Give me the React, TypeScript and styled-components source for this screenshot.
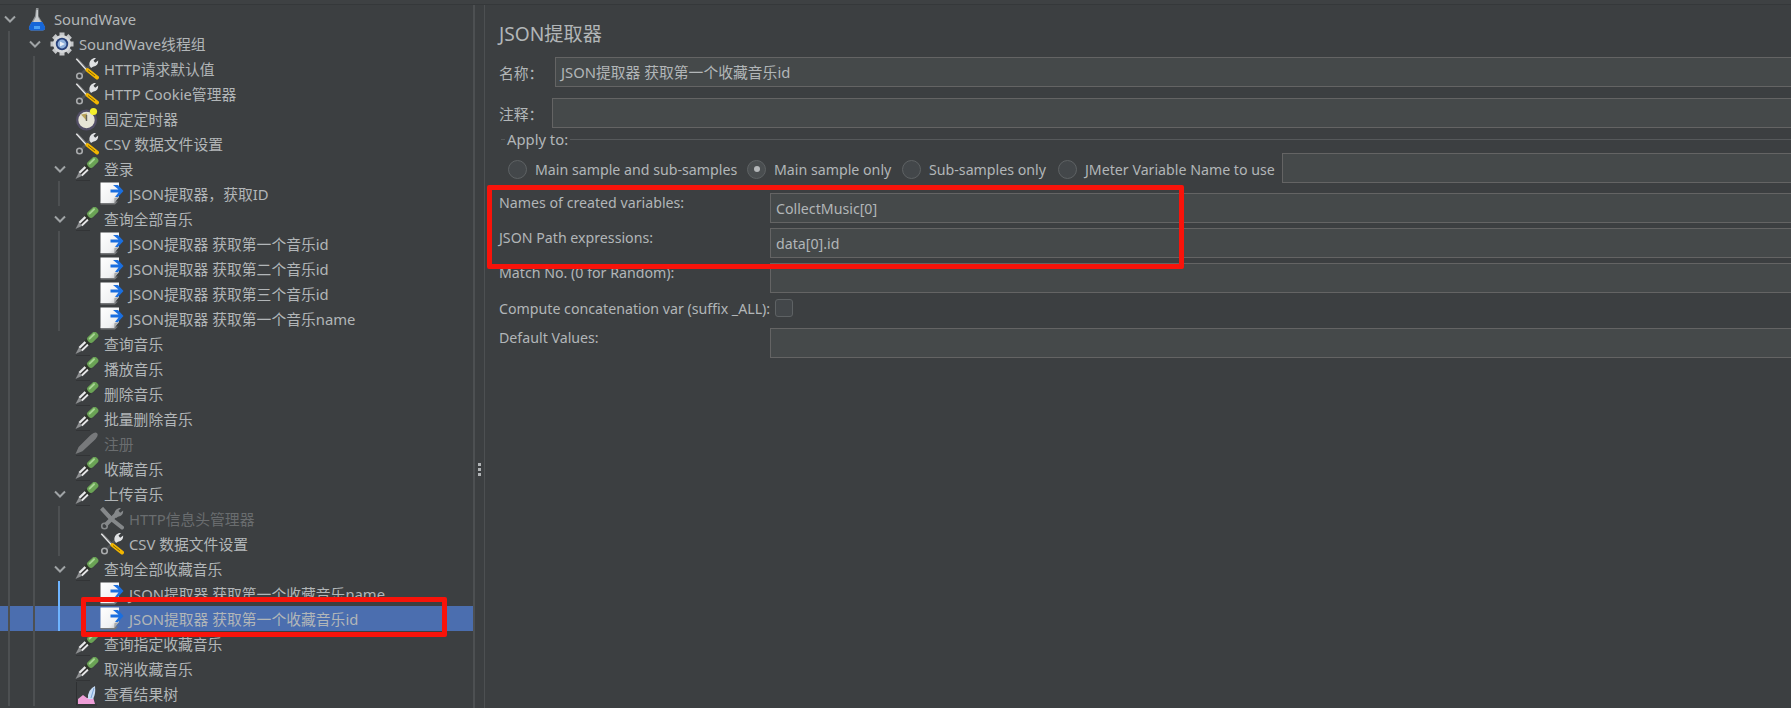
import React from "react";
import styled, { createGlobalStyle } from "styled-components";

const GlobalStyle = createGlobalStyle`
  html, body {
    margin: 0;
    padding: 0;
    height: 100%;
    background: #3c3f41;
    overflow: hidden;
  }
  * {
    box-sizing: border-box;
  }
`;

const Page = styled.div`
  position: relative;
  width: 1791px;
  height: 708px;
  overflow: hidden;
  background: #3c3f41;
  color: #b2b6b8;
  font-family: "Noto Sans", "Noto Sans CJK SC", sans-serif;
  font-size: 14.8px;
`;

const TopStrip = styled.div`
  height: 5px;
  border-bottom: 1px solid #35383a;
  background: #3e4143;
`;

const Main = styled.div`
  display: flex;
  height: 703px;
`;

/* ---------- tree ---------- */

const TreePane = styled.div`
  width: 473px;
  flex: none;
  padding-top: 1px;
  overflow: hidden;
`;

const Row = styled.div<{ $level: number; $selected?: boolean }>`
  position: relative;
  display: flex;
  align-items: center;
  height: 25px;
  padding-left: ${({ $level }) => $level * 25}px;
  background: ${({ $selected }) => ($selected ? "#4b6eaf" : "transparent")};
  white-space: nowrap;
`;

const Guide = styled.span<{ $level: number; $active?: boolean }>`
  position: absolute;
  top: 0;
  bottom: 0;
  left: ${({ $level }) => 8 + $level * 25}px;
  width: 2px;
  background: ${({ $active }) => ($active ? "#6eb4ff" : "#4d5052")};
`;

const ChevronSlot = styled.span`
  display: flex;
  align-items: center;
  width: 25px;
  flex: none;
  padding-left: 4px;
`;

const IconBox = styled.span`
  display: flex;
  width: 24px;
  height: 24px;
  flex: none;
  margin-right: 5px;
`;

const RowLabel = styled.span<{ $disabled?: boolean }>`
  color: ${({ $disabled }) => ($disabled ? "#6a6d6f" : "#b2b6b8")};
`;

const Chevron = () => (
  <svg width="12" height="8" viewBox="0 0 12 8">
    <path d="M1 1.5 L6 6.5 L11 1.5" fill="none" stroke="#a0a4a6" strokeWidth="2" />
  </svg>
);

const Flask = () => (
  <svg width="24" height="24" viewBox="0 0 24 24">
    <path d="M11 1 L13.5 1 L13.5 9 L20 20 Q20.5 23 18 23.5 L6 23.5 Q3.5 23 4 20 L10 9 Z" fill="#8f9396" />
    <path d="M11.5 3 L13 3 L13 10 L17 17 L7 17 L11 10 Z" fill="#c9ccce" />
    <path d="M6.5 15 L17.5 15 L20 20 Q20.5 23 18 23.5 L6 23.5 Q3.5 23 4 20 Z" fill="#1666d8" />
    <path d="M9 19 L15 19 L15 22 L9 22 Z" fill="#4aa0f5" />
  </svg>
);

const Gear = () => (
  <svg width="24" height="24" viewBox="0 0 24 24">
    {[0, 45, 90, 135, 180, 225, 270, 315].map((a) => (
      <rect key={a} x="9.5" y="0.5" width="5" height="5" fill="#c4c6c8" transform={`rotate(${a} 12 12)`} />
    ))}
    <circle cx="12" cy="12" r="9" fill="#d6d8da" />
    <circle cx="12" cy="12" r="6.2" fill="#27407a" />
    <circle cx="12" cy="12" r="4.4" fill="#8fb0dc" />
    <path d="M10 9.5 L15 12 L10 14.5 Z" fill="#e8eef6" />
  </svg>
);

const Tools = ({ off }: { off?: boolean }) => (
  <svg width="24" height="24" viewBox="0 0 24 24">
    {/* wrench, lower left to upper right */}
    <path d="M5.5 18 L17 6.5" stroke={off ? "#85888a" : "#505356"} strokeWidth={off ? 4 : 2.6} />
    <circle cx="4.5" cy="19" r="2.8" fill="none" stroke={off ? "#85888a" : "#a8aaac"} strokeWidth="1.6" />
    <path d="M14.5 8.5 Q13.5 3 19 1 L21 1 L18.5 3.8 L20.2 5.8 L23.2 3.4 Q23.5 8.5 18 9.8 L16 11 Z" fill={off ? "#85888a" : "#e0e2e4"} />
    {/* screwdriver, upper left to lower right */}
    <path d="M1.5 1.5 L12 13" stroke={off ? "#85888a" : "#e4e5e6"} strokeWidth={off ? 4 : 2} />
    <path d="M2 1 L12.5 12.5" stroke={off ? "#85888a" : "#303234"} strokeWidth={off ? 3 : 0.7} />
    <path d="M12.5 13 L22 20.5" stroke={off ? "#85888a" : "#f2b600"} strokeWidth="4" strokeLinecap="round" />
    {!off && <path d="M13 13.5 L20 19" stroke="#3a3000" strokeWidth="0.6" />}
  </svg>
);

const Timer = () => (
  <svg width="24" height="24" viewBox="0 0 24 24">
    <circle cx="11.5" cy="13" r="10.5" fill="#524e66" />
    <circle cx="11.5" cy="13" r="8.2" fill="#e6e4d6" />
    <path d="M11 13 L6 7.5 L12 6.5 Z" fill="#b9a35a" />
    <path d="M11.5 8 L11.5 14" stroke="#66625a" strokeWidth="1.4" />
    <circle cx="18.5" cy="4.5" r="3.6" fill="#f4ee2c" />
  </svg>
);

const Pipette = ({ off }: { off?: boolean }) => (
  <svg width="24" height="24" viewBox="0 0 24 24">
    <path d="M1 23.5 L15 23.5" stroke="#323436" strokeWidth="1" />
    <g transform="translate(0.5 22) rotate(-44)">
      {off ? (
        <path d="M0 0 L7 -2.8 L18 -3 Q30 -4 30 0 Q30 4 18 3 L7 2.8 Z" fill="#77797b" />
      ) : (
        <>
          <path d="M0 0 L7 -2.4 L7 2.4 Z" fill="#8c8e90" />
          <rect x="7" y="-2.8" width="9" height="5.6" fill="#e6e7e8" />
          <rect x="7" y="-0.7" width="9" height="1.6" fill="#2e2e2e" />
          <rect x="15.5" y="-3.4" width="2.6" height="6.8" fill="#2f352b" />
          <rect x="18" y="-3.6" width="12" height="7.2" rx="3" fill="#6aa355" />
          <rect x="20" y="-2.2" width="8" height="1.8" rx="0.9" fill="#a8d694" />
        </>
      )}
    </g>
  </svg>
);

const Extractor = () => (
  <svg width="24" height="24" viewBox="0 0 24 24">
    <defs>
      <linearGradient id="page" x1="0" y1="0" x2="1" y2="1">
        <stop offset="0" stopColor="#ffffff" />
        <stop offset="0.7" stopColor="#f0f1f2" />
        <stop offset="1" stopColor="#b8babc" />
      </linearGradient>
    </defs>
    <path d="M0.5 22.5 L15 22.5 L18 19.5 L0.5 19.5 Z" fill="#77797b" />
    <path d="M0.5 0.5 L19 0.5 L19 15 L14 21 L0.5 21 Z" fill="url(#page)" />
    <path d="M14 21 L14.5 16 L19 15 Z" fill="#a8aaac" />
    <path d="M13 3 L18 3 L23.5 9 L18 15 L15 15 L18.5 10.5 L10.5 10.5 L10.5 7.5 L18.5 7.5 Z" fill="#1a6fe0" />
  </svg>
);

const ResultTree = () => (
  <svg width="24" height="24" viewBox="0 0 24 24">
    <path d="M1.5 0 L1.5 23 L22 23" fill="none" stroke="#2e3032" strokeWidth="1" />
    <path d="M3 22 L3 17 L8 13 L12 16 L18 15 L20 22 Z" fill="#ee9fd8" />
    <path d="M13 17 Q12 8 20 4 Q21 12 18 17 Z" fill="#c8dcf4" />
    <path d="M16 16 L19 6" stroke="#7aa2d8" strokeWidth="1" />
  </svg>
);

type IconName = "flask" | "gear" | "tools" | "toolsOff" | "timer" | "pipette" | "pipetteOff" | "doc" | "result";

const icons: Record<IconName, React.ReactNode> = {
  flask: <Flask />,
  gear: <Gear />,
  tools: <Tools />,
  toolsOff: <Tools off />,
  timer: <Timer />,
  pipette: <Pipette />,
  pipetteOff: <Pipette off />,
  doc: <Extractor />,
  result: <ResultTree />,
};

interface TreeItem {
  level: number;
  icon: IconName;
  label: string;
  open?: boolean;
  disabled?: boolean;
  selected?: boolean;
  activeGuide?: boolean;
}

const treeItems: TreeItem[] = [
  { level: 0, icon: "flask", label: "SoundWave", open: true },
  { level: 1, icon: "gear", label: "SoundWave线程组", open: true },
  { level: 2, icon: "tools", label: "HTTP请求默认值" },
  { level: 2, icon: "tools", label: "HTTP Cookie管理器" },
  { level: 2, icon: "timer", label: "固定定时器" },
  { level: 2, icon: "tools", label: "CSV 数据文件设置" },
  { level: 2, icon: "pipette", label: "登录", open: true },
  { level: 3, icon: "doc", label: "JSON提取器，获取ID" },
  { level: 2, icon: "pipette", label: "查询全部音乐", open: true },
  { level: 3, icon: "doc", label: "JSON提取器 获取第一个音乐id" },
  { level: 3, icon: "doc", label: "JSON提取器 获取第二个音乐id" },
  { level: 3, icon: "doc", label: "JSON提取器 获取第三个音乐id" },
  { level: 3, icon: "doc", label: "JSON提取器 获取第一个音乐name" },
  { level: 2, icon: "pipette", label: "查询音乐" },
  { level: 2, icon: "pipette", label: "播放音乐" },
  { level: 2, icon: "pipette", label: "删除音乐" },
  { level: 2, icon: "pipette", label: "批量删除音乐" },
  { level: 2, icon: "pipetteOff", label: "注册", disabled: true },
  { level: 2, icon: "pipette", label: "收藏音乐" },
  { level: 2, icon: "pipette", label: "上传音乐", open: true },
  { level: 3, icon: "toolsOff", label: "HTTP信息头管理器", disabled: true },
  { level: 3, icon: "tools", label: "CSV 数据文件设置" },
  { level: 2, icon: "pipette", label: "查询全部收藏音乐", open: true },
  { level: 3, icon: "doc", label: "JSON提取器 获取第一个收藏音乐name", activeGuide: true },
  { level: 3, icon: "doc", label: "JSON提取器 获取第一个收藏音乐id", activeGuide: true, selected: true },
  { level: 2, icon: "pipette", label: "查询指定收藏音乐" },
  { level: 2, icon: "pipette", label: "取消收藏音乐" },
  { level: 2, icon: "result", label: "查看结果树" },
];

/* ---------- splitter ---------- */

const Splitter = styled.div`
  width: 12px;
  flex: none;
  display: flex;
  flex-direction: column;
  align-items: center;
  justify-content: center;
  gap: 2px;
  padding-top: 225px;
  border-left: 2px solid #4d5052;
  border-right: 1px solid #4d5052;
`;

const SplitterDot = styled.span`
  width: 3px;
  height: 3px;
  background: #b0b3b5;
`;

/* ---------- form ---------- */

const FormPane = styled.div`
  flex: 1;
  min-width: 0;
  padding: 14px 0 0 14px;
  overflow: hidden;
  font-size: 14.2px;
`;

const Title = styled.div`
  height: 30px;
  margin-bottom: 8px;
  font-size: 19.2px;
  line-height: 30px;
  white-space: nowrap;
`;

const FieldRow = styled.div<{ $labelWidth: number; $gap?: number }>`
  display: flex;
  align-items: center;
  height: 30px;
  margin-top: ${({ $gap }) => $gap ?? 0}px;
  margin-right: -3px;
  & > :first-child {
    width: ${({ $labelWidth }) => $labelWidth}px;
    flex: none;
  }
`;

const FieldLabel = styled.span<{ $shift?: number; $cjk?: boolean }>`
  position: relative;
  top: ${({ $shift }) => $shift ?? 0}px;
  font-size: ${({ $cjk }) => ($cjk ? "14.8px" : "inherit")};
  white-space: nowrap;
`;

const TextField = styled.div<{ $cjk?: boolean }>`
  flex: 1;
  height: 30px;
  padding: 0 5px;
  border: 1px solid #646464;
  background: #45494a;
  font-size: ${({ $cjk }) => ($cjk ? "14.8px" : "inherit")};
  line-height: ${({ $cjk }) => ($cjk ? "28px" : "29px")};
  white-space: nowrap;
`;

const Legend = styled.div`
  display: flex;
  align-items: center;
  gap: 2px;
  height: 20px;
  margin-top: 1px;
  margin-left: 2px;
  margin-right: -3px;
  font-size: 14.8px;
  white-space: nowrap;
  &::before {
    content: "";
    width: 4px;
    height: 1px;
    background: #56595b;
  }
  &::after {
    content: "";
    flex: 1;
    height: 1px;
    background: #56595b;
  }
`;

const RadioRow = styled.div`
  display: flex;
  align-items: center;
  height: 30px;
  margin-top: 4px;
  margin-left: 9px;
  margin-right: -3px;
`;

const RadioItem = styled.label<{ $width: number }>`
  display: flex;
  align-items: center;
  gap: 8px;
  width: ${({ $width }) => $width}px;
  flex: none;
  padding-top: 2px;
  white-space: nowrap;
`;

const RadioCircle = styled.span<{ $checked?: boolean }>`
  display: flex;
  align-items: center;
  justify-content: center;
  width: 19px;
  height: 19px;
  flex: none;
  border-radius: 50%;
  border: 1.5px solid #5e6264;
  background: ${({ $checked }) => ($checked ? "#4a4e50" : "#43474a")};
  &::after {
    content: "";
    display: ${({ $checked }) => ($checked ? "block" : "none")};
    width: 6px;
    height: 6px;
    border-radius: 50%;
    background: #b4b7b9;
  }
`;

const CheckRow = styled.div`
  display: flex;
  align-items: center;
  height: 28px;
  margin-top: 1px;
  margin-bottom: 6px;
`;

const CheckLabel = styled.span`
  width: 276px;
  flex: none;
  white-space: nowrap;
`;

const CheckBox = styled.span`
  width: 18px;
  height: 18px;
  border: 1.5px solid #5e6264;
  border-radius: 3px;
  background: #43474a;
`;

/* ---------- red marks drawn over the screenshot ---------- */

const FormMark = styled.div`
  position: absolute;
  left: 487px;
  top: 185px;
  width: 697px;
  height: 84px;
  border: 5px solid #f8130a;
  border-radius: 2px;
  pointer-events: none;
`;

const TreeMark = styled.div`
  position: absolute;
  left: 81px;
  top: 597px;
  width: 366px;
  height: 40px;
  border: 5px solid #f8130a;
  border-radius: 2px;
  pointer-events: none;
`;

const radios = [
  { label: "Main sample and sub-samples", width: 239 },
  { label: "Main sample only", width: 155, checked: true },
  { label: "Sub-samples only", width: 156 },
  { label: "JMeter Variable Name to use", width: 224 },
];

const App: React.FC = () => {
  return (
    <Page>
      <GlobalStyle />
      <TopStrip />
      <Main>
        <TreePane>
          {treeItems.map((item, i) => (
            <Row key={i} $level={item.level} $selected={item.selected}>
              {Array.from({ length: item.level }).map((_, g) => (
                <Guide key={g} $level={g} $active={item.activeGuide && g === 2} />
              ))}
              <ChevronSlot>{item.open && <Chevron />}</ChevronSlot>
              <IconBox>{icons[item.icon]}</IconBox>
              <RowLabel $disabled={item.disabled}>{item.label}</RowLabel>
            </Row>
          ))}
        </TreePane>
        <Splitter>
          <SplitterDot />
          <SplitterDot />
          <SplitterDot />
        </Splitter>
        <FormPane>
          <Title>JSON提取器</Title>
          <FieldRow $labelWidth={56}>
            <FieldLabel $cjk>名称：</FieldLabel>
            <TextField $cjk>JSON提取器 获取第一个收藏音乐id</TextField>
          </FieldRow>
          <FieldRow $labelWidth={53} $gap={11}>
            <FieldLabel $cjk>注释：</FieldLabel>
            <TextField />
          </FieldRow>
          <Legend>Apply to:</Legend>
          <RadioRow>
            {radios.map((r) => (
              <RadioItem key={r.label} $width={r.width}>
                <RadioCircle $checked={r.checked} />
                {r.label}
              </RadioItem>
            ))}
            <TextField />
          </RadioRow>
          <FieldRow $labelWidth={271} $gap={10}>
            <FieldLabel $shift={-6}>Names of created variables:</FieldLabel>
            <TextField>CollectMusic[0]</TextField>
          </FieldRow>
          <FieldRow $labelWidth={271} $gap={5}>
            <FieldLabel $shift={-6}>JSON Path expressions:</FieldLabel>
            <TextField>data[0].id</TextField>
          </FieldRow>
          <FieldRow $labelWidth={271} $gap={5}>
            <FieldLabel $shift={-6}>Match No. (0 for Random):</FieldLabel>
            <TextField />
          </FieldRow>
          <CheckRow>
            <CheckLabel>Compute concatenation var (suffix _ALL):</CheckLabel>
            <CheckBox />
          </CheckRow>
          <FieldRow $labelWidth={271}>
            <FieldLabel $shift={-6}>Default Values:</FieldLabel>
            <TextField />
          </FieldRow>
        </FormPane>
      </Main>
      <TreeMark />
      <FormMark />
    </Page>
  );
};

export default App;
